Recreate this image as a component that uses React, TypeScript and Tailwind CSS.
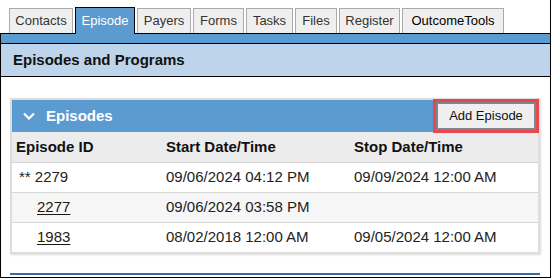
import React from "react"

const tabs = [
  { label: "Contacts", w: "w-[64px]" },
  { label: "Episode", w: "w-[60px]", active: true },
  { label: "Payers", w: "w-[54px]" },
  { label: "Forms", w: "w-[51px]" },
  { label: "Tasks", w: "w-[47px]" },
  { label: "Files", w: "w-[42px]" },
  { label: "Register", w: "w-[61px]" },
  { label: "OutcomeTools", w: "w-[102px]", strong: true },
]

const episodes = [
  { id: "** 2279", link: false, start: "09/06/2024 04:12 PM", stop: "09/09/2024 12:00 AM" },
  { id: "2277", link: true, start: "09/06/2024 03:58 PM", stop: "" },
  { id: "1983", link: true, start: "08/02/2018 12:00 AM", stop: "09/05/2024 12:00 AM" },
]

export default function App() {
  return (
    <div className="w-[554px] h-[280px] bg-white font-['Liberation_Sans',Arial,sans-serif] text-[#222]">
      <div className="w-[551px] h-[278px] border-r border-black flex flex-col">
        {/* Tab strip */}
        <div className="flex items-end gap-[2px] pl-[9px] h-[33px] shrink-0">
          {tabs.map((t) =>
            t.active ? (
              <div
                key={t.label}
                className={`${t.w} h-[27px] -mb-[1px] relative z-10 flex items-center justify-center bg-[#5b9bd0] border border-b-0 border-black text-[13px] text-white`}
              >
                {t.label}
              </div>
            ) : (
              <div
                key={t.label}
                className={`${t.w} h-[25px] flex items-center justify-center bg-[#efefef] border border-b-0 border-[#aaaaaa] text-[13px] ${
                  t.strong ? "text-black" : "text-[#333]"
                }`}
              >
                {t.label}
              </div>
            )
          )}
        </div>

        {/* Content box */}
        <div className="flex-1 border-l border-t border-b border-black flex flex-col">
          <div className="h-[10px] bg-[#5b9bd0] border-b border-black" />
          <div className="h-[33px] bg-[#bdd4ea] border-b border-black flex items-center pl-[12px] text-[15px] font-bold text-[#111]">
            Episodes and Programs
          </div>

          {/* Episodes panel */}
          <div className="ml-[9px] mt-[21px] w-[530px] border-2 border-[#dddddd] shadow-[1px_1px_2px_rgba(0,0,0,0.15)]">
            <div className="h-[32px] bg-[#5b9bd0] flex items-center justify-between pl-[11px] pr-[2px]">
              <div className="flex items-center gap-[11px] text-white text-[15px] font-bold">
                <svg width="12" height="8" viewBox="0 0 12 8" fill="none">
                  <polyline points="1,1.5 6,6.5 11,1.5" stroke="white" strokeWidth="2.2" />
                </svg>
                Episodes
              </div>
              <button className="h-[28px] w-[100px] bg-[#efefef] border-2 border-[#7c8590] outline-[3px] outline-solid outline-[#e8474d] text-[13px] text-[#111]">
                Add Episode
              </button>
            </div>

            <div className="h-[31px] bg-[#ececec] border-b border-[#d6d6d6] flex items-center text-[15px] font-bold text-[#111]">
              <div className="w-[150px] pl-[4px]">Episode ID</div>
              <div className="w-[188px] pl-[4px]">Start Date/Time</div>
              <div className="pl-[4px]">Stop Date/Time</div>
            </div>

            {episodes.map((e, i) => (
              <div
                key={e.id}
                className={`flex items-center text-[15px] ${
                  i === episodes.length - 1 ? "h-[29px]" : "h-[30px] border-b border-[#d6d6d6]"
                } ${i === 1 ? "bg-[#f6f6f6]" : "bg-white"}`}
              >
                <div className={`w-[150px] ${e.link ? "pl-[25px]" : "pl-[7px]"}`}>
                  {e.link ? (
                    <a href="#" className="underline underline-offset-[2px] text-[#1a1a1a]">
                      {e.id}
                    </a>
                  ) : (
                    e.id
                  )}
                </div>
                <div className="w-[188px] pl-[4px]">{e.start}</div>
                <div className="pl-[4px]">{e.stop}</div>
              </div>
            ))}
          </div>

          <div className="ml-[9px] mt-[19px] w-[530px] h-[2px] bg-[#3a6b9c]" />
        </div>
      </div>
    </div>
  )
}
